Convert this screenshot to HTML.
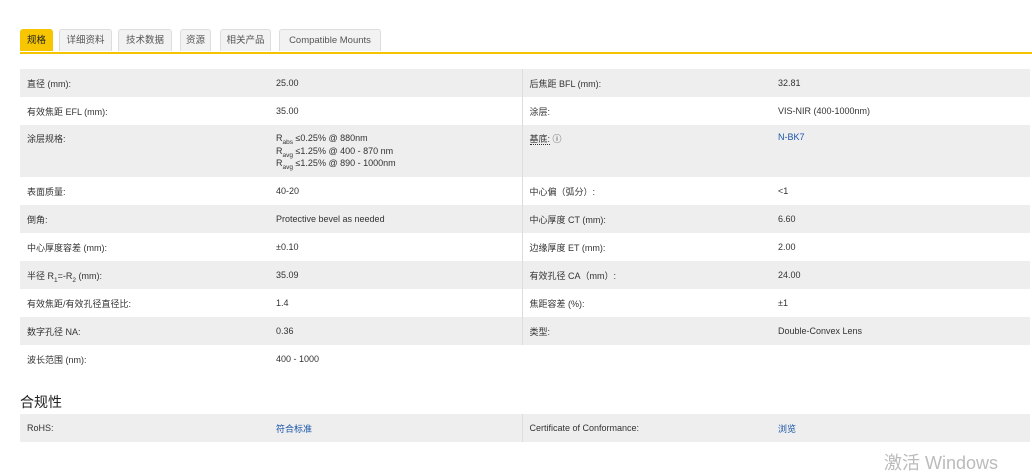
<!DOCTYPE html>
<html><head><meta charset="utf-8"><style>
body{margin:0;width:1032px;height:466px;background:#fff;font-family:"Liberation Sans","Noto Sans CJK SC",sans-serif;color:#333;overflow:hidden;position:relative}
.tabs{position:absolute;left:20px;top:29px;height:23px;width:1012px;border-bottom:2px solid #f5c400}
.tab{position:absolute;top:0;height:22px;line-height:22px;font-size:9.5px;color:#555;background:#f2f2f2;border:1px solid #ddd;border-bottom:none;border-radius:3px 3px 0 0;text-align:center;box-sizing:border-box}
.tab.on{background:#f7c600;color:#222;border-color:#f7c600}
table{position:absolute;left:20px;width:1010px;border-collapse:collapse;font-size:9px;color:#333}
td{padding:0 7px;height:28px;vertical-align:middle}
tr.g td{background:#eeeeee}
td.c3{border-left:1px solid #ddd}
td.top{vertical-align:top;padding-top:7px}
a{color:#1a56a8;text-decoration:none}
sub{font-size:6.5px;line-height:0}
h3{position:absolute;left:20px;top:392px;margin:0;font-size:14px;font-weight:normal;color:#222}
.wm{position:absolute;left:884px;top:454px;font-size:18px;line-height:18px;color:#bbb}
</style></head><body>
<div class="tabs">
<div class="tab on" style="left:0;width:33px">规格</div>
<div class="tab" style="left:39px;width:53px">详细资料</div>
<div class="tab" style="left:98px;width:54px">技术数据</div>
<div class="tab" style="left:160px;width:31px">资源</div>
<div class="tab" style="left:200px;width:51px">相关产品</div>
<div class="tab" style="left:259px;width:102px">Compatible Mounts</div>
</div>
<table style="top:69px">
<colgroup><col style="width:249px"><col style="width:253px"><col style="width:249px"><col></colgroup>
<tr class="g"><td>直径 (mm):</td><td>25.00</td><td class="c3">后焦距 BFL (mm):</td><td>32.81</td></tr>
<tr><td>有效焦距 EFL (mm):</td><td>35.00</td><td class="c3">涂层:</td><td>VIS-NIR (400-1000nm)</td></tr>
<tr class="g"><td class="top" style="height:45px">涂层规格:</td><td class="top" style="line-height:12.5px">R<sub>abs</sub> ≤0.25% @ 880nm<br>R<sub>avg</sub> ≤1.25% @ 400 - 870 nm<br>R<sub>avg</sub> ≤1.25% @ 890 - 1000nm</td><td class="c3 top"><span style="border-bottom:1px dotted #333">基底:</span> ⓘ</td><td class="top"><a>N-BK7</a></td></tr>
<tr><td>表面质量:</td><td>40-20</td><td class="c3">中心偏（弧分）:</td><td>&lt;1</td></tr>
<tr class="g"><td>倒角:</td><td>Protective bevel as needed</td><td class="c3">中心厚度 CT (mm):</td><td>6.60</td></tr>
<tr><td>中心厚度容差 (mm):</td><td>±0.10</td><td class="c3">边缘厚度 ET (mm):</td><td>2.00</td></tr>
<tr class="g"><td>半径 R<sub>1</sub>=-R<sub>2</sub> (mm):</td><td>35.09</td><td class="c3">有效孔径 CA（mm）:</td><td>24.00</td></tr>
<tr><td>有效焦距/有效孔径直径比:</td><td>1.4</td><td class="c3">焦距容差 (%):</td><td>±1</td></tr>
<tr class="g"><td>数字孔径 NA:</td><td>0.36</td><td class="c3">类型:</td><td>Double-Convex Lens</td></tr>
<tr><td>波长范围 (nm):</td><td>400 - 1000</td><td class="c3" style="border:none"></td><td></td></tr>
</table>
<h3>合规性</h3>
<table style="top:414px">
<colgroup><col style="width:249px"><col style="width:253px"><col style="width:249px"><col></colgroup>
<tr class="g"><td>RoHS:</td><td><a>符合标准</a></td><td class="c3">Certificate of Conformance:</td><td><a>浏览</a></td></tr>
</table>
<div class="wm">激活 Windows</div>
</body></html>
